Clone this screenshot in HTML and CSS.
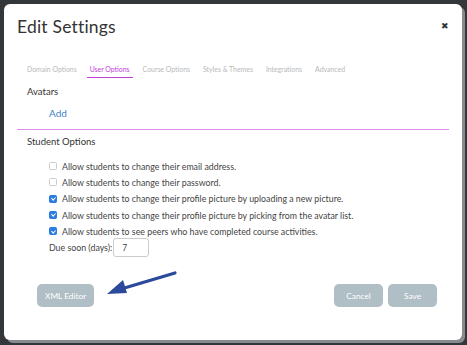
FILE: index.html
```html
<!DOCTYPE html>
<html lang="en">
<head>
  <meta charset="UTF-8" />
  <title>Edit Settings</title>
  <link rel="stylesheet" href="styles.css">
</head>
<body>
  <div class="modal">
    <div class="modal-header">
      <h1>Edit Settings</h1>
      <span class="close">&#10006;</span>
    </div>

    <div class="tabs">
      <span class="tab">Domain Options</span>
      <span class="tab active">User Options</span>
      <span class="tab">Course Options</span>
      <span class="tab">Styles &amp; Themes</span>
      <span class="tab">Integrations</span>
      <span class="tab">Advanced</span>
    </div>

    <div class="section">
      <h3>Avatars</h3>
      <a class="add-link">Add</a>
    </div>

    <div class="section student">
      <h3>Student Options</h3>
      <ul class="options">
        <li><span class="box"></span>Allow students to change their email address.</li>
        <li><span class="box"></span>Allow students to change their password.</li>
        <li><span class="box checked"></span>Allow students to change their profile picture by uploading a new picture.</li>
        <li><span class="box checked"></span>Allow students to change their profile picture by picking from the avatar list.</li>
        <li><span class="box checked"></span>Allow students to see peers who have completed course activities.</li>
      </ul>
      <div class="due">
        <label>Due soon (days):</label>
        <span class="input">7</span>
      </div>
    </div>

    <div class="footer">
      <button class="btn">XML Editor</button>
      <svg class="arrow" width="80" height="30" viewBox="0 0 80 30">
        <path d="M72 4 L18 20" stroke="#2b4a9b" stroke-width="3.2" stroke-linecap="round" fill="none"/>
        <path d="M4 25 L20 11 L24 24 Z" fill="#2b4a9b"/>
      </svg>
      <div class="spacer"></div>
      <button class="btn">Cancel</button>
      <button class="btn">Save</button>
    </div>
  </div>
</body>
</html>
```

FILE: styles.css
```css
body {
  margin: 0;
  width: 467px;
  height: 345px;
  background: #34373a;
  font-family: 'Lato', 'Noto Sans', sans-serif;
  color: #333;
  overflow: hidden;
}

.modal {
  margin: 4px 0 0 4px;
  width: 458px;
  height: 336px;
  background: #fff;
  border-radius: 6px;
  box-sizing: border-box;
  padding: 0 13px 0 13px;
  box-shadow: 3px 3px 0 #888c90;
  position: relative;
}

.modal-header {
  display: flex;
  justify-content: space-between;
  align-items: flex-start;
  padding: 12px 0 0 0;
  height: 52px;
  box-sizing: border-box;
}

.modal-header h1 {
  font-size: 17.5px;
  font-weight: 400;
  margin: 0;
  color: #333;
  letter-spacing: 0.2px;
}

.close {
  font-size: 9px;
  color: #333;
  margin-top: 4px;
}

.tabs {
  display: flex;
  gap: 7px;
  padding: 9px 0 0 7px;
  font-size: 6.9px;
}

.tab {
  color: #b9b9b9;
  padding: 0 3px 4px 3px;
}

.tab.active {
  color: #c040d8;
  border-bottom: 1px solid #c040d8;
}

.section h3 {
  font-size: 9.5px;
  font-weight: 400;
  margin: 0;
  padding-left: 10px;
  color: #333;
}

.tabs + .section h3 {
  padding-top: 8px;
}

.add-link {
  display: block;
  color: #3b7fc7;
  font-size: 10px;
  padding: 10px 0 10px 32px;
  border-bottom: 1px solid #dc8fe8;
}

.student h3 {
  padding-top: 6px;
}

.options {
  list-style: none;
  margin: 11px 0 0 0;
  padding: 0 0 0 32px;
}

.options li {
  display: flex;
  align-items: center;
  height: 16.3px;
  font-size: 8.8px;
  color: #444;
}

.box {
  width: 6px;
  height: 6px;
  border: 1px solid #ccc;
  border-radius: 1.5px;
  margin-right: 5px;
  background: #fff;
  position: relative;
}

.box.checked {
  background: #2b7de0;
  border-color: #2b7de0;
}

.box.checked::after {
  content: "";
  position: absolute;
  left: 1.7px;
  top: 0.3px;
  width: 1.6px;
  height: 3.3px;
  border: solid #fff;
  border-width: 0 1px 1px 0;
  transform: rotate(45deg);
}

.due {
  display: flex;
  align-items: center;
  gap: 1px;
  padding-left: 32px;
  font-size: 8.8px;
  color: #444;
  margin-top: -1px;
}

.input {
  width: 36px;
  height: 19px;
  box-sizing: border-box;
  border: 1px solid #ccc;
  border-radius: 3px;
  padding: 4px 0 0 8px;
  font-size: 8.5px;
}

.footer {
  display: flex;
  align-items: center;
  gap: 5px;
  padding: 27px 12px 0 20px;
  position: relative;
}

.spacer {
  flex: 1;
}

.btn {
  background: #b0bec5;
  color: #fff;
  border: none;
  border-radius: 5px;
  height: 23px;
  font-family: 'Lato', 'Noto Sans', sans-serif;
  font-size: 8.3px;
  padding: 0 8px;
}

.footer .btn:nth-last-child(2) {
  width: 49px;
}

.footer .btn:last-child {
  width: 49px;
}

.arrow {
  position: absolute;
  left: 86px;
  top: 12px;
}
```
